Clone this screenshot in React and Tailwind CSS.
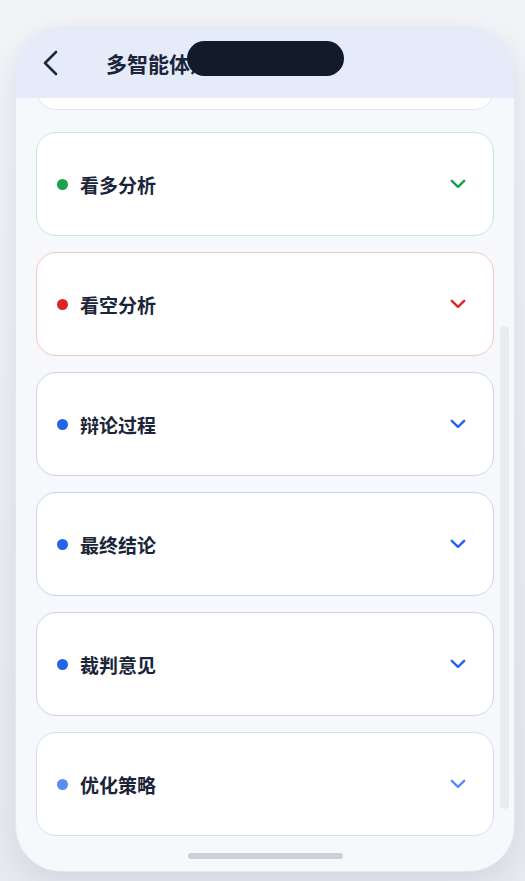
import React from "react";

const cards = [
  { label: "看多分析", dot: "bg-[#16a34a]", border: "border-[#c3e8cd]", chev: "text-[#16a34a]" },
  { label: "看空分析", dot: "bg-[#dc2626]", border: "border-[#f6c4c8]", chev: "text-[#dc2626]" },
  { label: "辩论过程", dot: "bg-[#2563eb]", border: "border-[#c9d3f6]", chev: "text-[#2563eb]" },
  { label: "最终结论", dot: "bg-[#2563eb]", border: "border-[#c9d3f6]", chev: "text-[#2563eb]" },
  { label: "裁判意见", dot: "bg-[#2563eb]", border: "border-[#c9d3f6]", chev: "text-[#2563eb]" },
  { label: "优化策略", dot: "bg-[#5b8cf3]", border: "border-[#d1ddf9]", chev: "text-[#5b8cf3]" },
];

function Chevron({ className }) {
  return (
    <svg width="16" height="10" viewBox="0 0 16 10" className={className} fill="none">
      <path d="M1.8 1.8 L8 7.8 L14.2 1.8" stroke="currentColor" strokeWidth="2.4" strokeLinecap="round" strokeLinejoin="round" />
    </svg>
  );
}

export default function App() {
  return (
    <div
      className="w-[525px] h-[881px] overflow-hidden bg-gradient-to-b from-[#f3f4f8] to-[#e8eaf0] pt-[27px] pl-[15px]"
      style={{ fontFamily: '"Noto Sans CJK SC", "Noto Sans", sans-serif' }}
    >
      <div className="relative w-[500px] h-[845px] rounded-[46px] border border-[#e4e7ee] bg-[#f6f8fc] overflow-hidden shadow-[0_10px_30px_rgba(30,41,80,0.10)] flex flex-col">
        <div className="h-[70px] shrink-0 bg-[#e5ebf9] flex items-center pl-[26px] z-10">
          <svg width="18" height="26" viewBox="0 0 18 26" fill="none">
            <path d="M14 2 L3 13 L14 24" stroke="#1e293b" strokeWidth="2.6" strokeLinecap="round" strokeLinejoin="round" />
          </svg>
          <span className="ml-[46px] text-[21px] font-semibold text-[#1b2539] leading-none">多智能体辩论</span>
        </div>

        <div className="flex-1 overflow-hidden px-[20px]">
          <div className="mt-[-92px] h-[104px] rounded-[20px] border border-[#e2e6ee] bg-white mb-[22px]" />
          <div className="flex flex-col gap-[16px]">
            {cards.map((c) => (
              <div
                key={c.label}
                className={`h-[104px] shrink-0 rounded-[20px] border-[1.5px] ${c.border} bg-white flex items-center pl-[20px] pr-[27px]`}
              >
                <span className={`w-[11px] h-[11px] rounded-full ${c.dot}`} />
                <span className="ml-[12px] text-[19px] font-semibold text-[#1b2539] leading-none">{c.label}</span>
                <span className="ml-auto flex items-center">
                  <Chevron className={c.chev} />
                </span>
              </div>
            ))}
          </div>
        </div>

        <div className="h-[35px] shrink-0 flex items-start justify-center pt-[17px]">
          <div className="w-[155px] h-[6px] rounded-full bg-[#cdd0d6]" />
        </div>

        <div className="absolute right-[5px] top-[298px] w-[9px] h-[483px] rounded-full bg-[#e9ebf0]" />
        <div className="absolute left-[171px] top-[13px] w-[157px] h-[35px] rounded-full bg-[#131a2a] z-20" />
      </div>
    </div>
  );
}
